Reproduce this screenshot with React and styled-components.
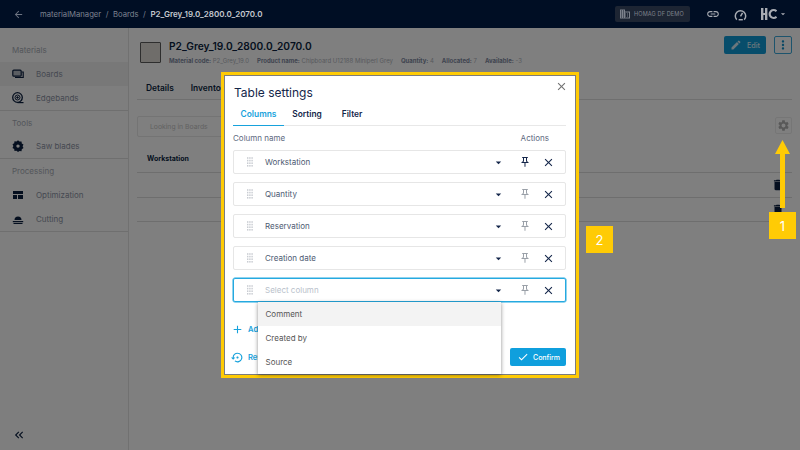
import React from "react";
import styled, { createGlobalStyle } from "styled-components";
import {
  MdArrowBack, MdDomain, MdLink, MdEdit, MdMoreVert, MdSettings, MdDelete, MdClose,
  MdOutlinePushPin, MdArrowDropDown, MdAdd, MdSettingsBackupRestore, MdCheck, MdKeyboardDoubleArrowLeft,
} from "react-icons/md";

const Global = createGlobalStyle`
  html, body { margin: 0; padding: 0; width: 800px; height: 450px; overflow: hidden; background: #fff; }
  body { font-family: Inter, "Liberation Sans", sans-serif; color: #0b1f3f; }
  * { box-sizing: border-box; }
`;

const Page = styled.div`width: 800px; height: 450px; display: flex; flex-direction: column;`;
const Header = styled.header`
  height: 28px; flex: none; background: #000e24; display: flex; align-items: center; position: relative; z-index: 2;
  padding: 0 12px 0 13px; color: #fff; font-size: 7.7px;
`;
const BackIcon = styled(MdArrowBack)`font-size: 11px; color: #6d7482; margin-right: 16px;`;
const Crumb = styled.span`color: ${p => (p.$strong ? "#c4c8cf" : "#7d8390")}; font-weight: ${p => (p.$strong ? 600 : 400)}; font-size: ${p => (p.$strong ? 8 : 7.7)}px; margin-right: 4.5px; white-space: nowrap;`;
const HeaderRight = styled.div`margin-left: auto; display: flex; align-items: center; color: #a8acb3;`;
const Chip = styled.div`
  width: 75px; height: 16px; background: #1d2533; border-radius: 2px; display: flex; align-items: center;
  padding-left: 4px; gap: 3px; font-size: 5.6px; color: #7d828c; margin-right: 16px; white-space: nowrap; letter-spacing: .1px;
`;
const ChipIcon = styled(MdDomain)`font-size: 12px; color: #7d828c; flex: none;`;
const TopLink = styled(MdLink)`font-size: 14px; margin-right: 14px;`;
const Gauge = styled.svg`width: 13px; height: 13px; margin-right: 14px;`;
const Logo = styled.svg`width: 16px; height: 12px;`;
const LogoCaret = styled(MdArrowDropDown)`font-size: 10px; margin-left: 1px;`;

const Body = styled.div`flex: 1; display: flex; min-height: 0;`;
const Sidebar = styled.nav`width: 129px; flex: none; border-right: 1px solid #e2e2e2; display: flex; flex-direction: column; position: relative; background: #fcfcfc;`;
const Section = styled.div`border-bottom: 1px solid #dedede; padding-top: ${p => p.$pad ?? 0}px;`;
const SectionTitle = styled.div`height: ${p => p.$h ?? 24}px; padding: 0 12px; display: flex; align-items: center; font-size: 8px; color: #a8adb6;`;
const NavItem = styled.div`
  height: 24px; display: flex; align-items: center; padding-left: 12px; font-size: 8px; color: #8c93a4;
  background: ${p => (p.$active ? "#f0f0f0" : "transparent")};
`;
const NavIconSlot = styled.span`width: 24px; display: flex; color: #0b1f3f; flex: none;`;
const NavSvg = styled.svg`width: 12px; height: 12px;`;
const Collapse = styled(MdKeyboardDoubleArrowLeft)`position: absolute; left: 12px; bottom: 8px; font-size: 14px; color: #0b1f3f;`;

const Main = styled.main`flex: 1; padding: 8px 8px 0 8px; min-width: 0;`;
const TitleRow = styled.div`display: flex; align-items: flex-start; height: 46px; padding-top: 6px;`;
const Thumb = styled.div`width: 21px; height: 21px; background: #dedad4; border: 1px solid #5d5d5d; border-radius: 1px; margin: 0 8px 0 3px; flex: none;`;
const Titles = styled.div`flex: 1; min-width: 0;`;
const BoardTitle = styled.div`font-size: 10.2px; font-weight: 600; line-height: 14px; margin-top: -3px;`;
const Meta = styled.div`display: flex; gap: 8px; font-size: 6px; margin-top: 4px; color: #b0b4bc; white-space: nowrap;`;
const MetaKey = styled.b`font-weight: 700; color: #8088a0;`;
const EditButton = styled.button`
  width: 42px; height: 18px; background: #0f9ad6; border: 0; border-radius: 2px; color: #d9eef8; margin-top: -6px;
  display: flex; align-items: center; justify-content: center; gap: 5px; font: 500 7.2px Inter, sans-serif;
`;
const MoreButton = styled.button`
  width: 18px; height: 18px; background: #fff; border: 1px solid #3ba9db; border-radius: 2px; margin: -6px 0 0 8px;
  display: flex; align-items: center; justify-content: center; padding: 0; color: #0f8fc9; font-size: 14px;
`;
const TabsBar = styled.div`height: 18px; border-bottom: 1px solid #dfdfdf; display: flex; gap: 17px; padding: 1px 0 0 9px; font-size: 8.4px; font-weight: 600; line-height: 10px;`;
const SearchRow = styled.div`display: flex; align-items: flex-start; justify-content: space-between; margin-top: 16px; height: 21px;`;
const SearchBox = styled.div`width: 300px; height: 21px; border: 1px solid #e8e8e8; border-radius: 2px; padding-left: 12px; display: flex; align-items: center; font-size: 6.8px; color: #c4c4c4;`;
const GearBox = styled.div`width: 17px; height: 17px; margin-top: 1px; border: 1px solid #ececec; border-radius: 2px; display: flex; align-items: center; justify-content: center; color: #b0b0b0; font-size: 13px;`;
const TableHead = styled.div`height: 36px; border-bottom: 1px solid #dcdcdc; display: flex; align-items: center; padding: 8px 0 0 10px; font-size: 7px; font-weight: 700;`;
const TableRow = styled.div`height: ${p => p.$h}px; border-bottom: 1px solid #dcdcdc; display: flex; align-items: center; justify-content: flex-end; padding-right: 7px; font-size: 14px; color: #0b1f3f;`;

const Overlay = styled.div`position: fixed; inset: 0; z-index: 1; background: rgba(0,0,0,.5); display: flex; align-items: center; justify-content: center;`;
const Highlight = styled.div`border: 3px solid #ffcb05; padding: 1px; background: #7c7c7c;`;
const Dialog = styled.section`width: 350px; height: 298px; background: #fff; padding: 0 9px 0 8px; position: relative; display: flex; flex-direction: column;`;
const DialogHead = styled.div`height: 31px; padding: 9px 0 0 1px; display: flex; justify-content: space-between;`;
const DialogTitle = styled.h2`margin: 0; font-size: 12px; line-height: 15px; font-weight: 400; color: #14264a;`;
const CloseButton = styled(MdClose)`font-size: 13px; color: #727272; margin: 0 -2px 0 0; position: relative; top: -5px;`;
const DialogTabs = styled.div`height: 19px; border-bottom: 1px solid #e8e8e8; display: flex;`;
const DialogTab = styled.div`
  width: ${p => p.$w}px; height: 19px; text-align: center; font-size: 8.4px; font-weight: 600; padding-top: 1px; line-height: 12px;
  color: ${p => (p.$active ? "#17a2dc" : "#14264a")};
  border-bottom: 1.5px solid ${p => (p.$active ? "#17a2dc" : "transparent")};
`;
const ColHead = styled.div`height: 24px; display: flex; justify-content: space-between; align-items: center; font-size: 8px; color: #5d6980; padding: 0 17px 0 0;`;
const Rows = styled.div`display: flex; flex-direction: column; gap: 8px;`;
const Row = styled.div`
  height: 24px; border: 1px solid ${p => (p.$focus ? "#25a9e0" : "#e6e6e6")}; border-radius: 2px; display: flex; align-items: center;
  padding-left: 13px; font-size: 8px; color: ${p => (p.$placeholder ? "#b9bfcb" : "#4d5a72")};
  box-shadow: ${p => (p.$focus ? "0 0 0 .5px #25a9e0" : "none")};
`;
const Grip = styled.svg`width: 6px; height: 10px; margin-right: 12px; flex: none;`;
const RowLabel = styled.span`flex: 1;`;
const Caret = styled(MdArrowDropDown)`font-size: 13px; color: #14264a; margin-right: 14px;`;
const Pin = styled(MdOutlinePushPin)`font-size: 12px; color: ${p => (p.$dim ? "#9aa0a8" : "#14264a")}; margin-right: 11px;`;
const RowClose = styled(MdClose)`font-size: 13px; color: #14264a; margin-right: 10px;`;
const AddLine = styled.div`display: flex; align-items: center; height: 14px; margin-top: 20px; margin-left: -2px; gap: 4px; color: #17a2dc; font-size: 7.6px; font-weight: 600;`;
const PlusIcon = styled(MdAdd)`font-size: 13px;`;
const Footer = styled.div`display: flex; justify-content: space-between; align-items: center; margin-top: 12px; height: 18px; color: #17a2dc; font-size: 7.6px; font-weight: 600;`;
const Reset = styled.span`display: flex; align-items: center; gap: 4px; margin-left: -2px;`;
const ResetIcon = styled(MdSettingsBackupRestore)`font-size: 13px;`;
const Confirm = styled.button`
  width: 56px; height: 18px; border: 0; background: #0f9fdd; color: #fff; border-radius: 2px; display: flex; align-items: center;
  padding: 0 0 0 7px; gap: 4px; font: 500 7px Inter, sans-serif;
`;
const ConfirmIcon = styled(MdCheck)`font-size: 12px;`;
const Menu = styled.div`position: absolute; left: 32.5px; top: 226px; width: 243px; background: #fff; box-shadow: 0 1px 4px rgba(0,0,0,.45); z-index: 2;`;
const MenuItem = styled.div`height: 24px; display: flex; align-items: center; padding-left: 8px; font-size: 8px; color: #555; background: ${p => (p.$hover ? "#f3f3f3" : "#fff")};`;

const Tag = styled.div`position: absolute; left: ${p => p.$x}px; top: ${p => p.$y}px; width: 27px; height: 27px; background: #ffcb05; color: #fff; display: flex; align-items: center; justify-content: center; font-size: 13px;`;
const ArrowSvg = styled.svg`position: absolute; left: 775px; top: 140px; width: 15px; height: 70px;`;

const GripIcon = () => (
  <Grip viewBox="0 0 6 10">
    {[0, 1, 2].flatMap(c => [0, 1, 2, 3].map(r => <rect key={`${c}${r}`} x={c * 2.2} y={r * 2.6 + .2} width="1.4" height="1.6" fill="#c9ccd2" />))}
  </Grip>
);

const ColumnRow = ({ label, dim, focus, placeholder }) => (
  <Row $focus={focus} $placeholder={placeholder}>
    <GripIcon />
    <RowLabel>{label}</RowLabel>
    <Caret />
    <Pin $dim={dim} />
    <RowClose />
  </Row>
);

const Nav = ({ active, icon, children }) => (
  <NavItem $active={active}><NavIconSlot>{icon}</NavIconSlot>{children}</NavItem>
);

export default function App() {
  return (
    <>
      <Global />
      <Page>
        <Header>
          <BackIcon />
          <Crumb>materialManager</Crumb><Crumb>/</Crumb><Crumb>Boards</Crumb><Crumb>/</Crumb>
          <Crumb $strong>P2_Grey_19.0_2800.0_2070.0</Crumb>
          <HeaderRight>
            <Chip><ChipIcon />HOMAG DF DEMO</Chip>
            <TopLink />
            <Gauge viewBox="0 0 14 14" fill="none" stroke="#a8acb3" strokeWidth="1.6">
              <path d="M3 12.5A5.6 5.6 0 1 1 11 12.5" />
              <path d="M7 9 L9.2 5.2" />
              <path d="M5 12.6h4.5" />
            </Gauge>
            <Logo viewBox="0 0 16 12">
              <path fill="#a8acb3" d="M0 0h2.4v12H0zM4 0h2.4v12H4zM2.4 5H4v2H2.4z" />
              <path fill="none" stroke="#a8acb3" strokeWidth="2.2" d="M15.5 3.2A4 4 0 1 0 15.5 8.8" />
            </Logo>
            <LogoCaret />
          </HeaderRight>
        </Header>
        <Body>
          <Sidebar>
            <Section $pad={10}>
              <SectionTitle>Materials</SectionTitle>
              <Nav active icon={<NavSvg viewBox="0 0 12 12" fill="none" stroke="#0b1f3f" strokeWidth="1.2"><rect x=".8" y="2.2" width="8.4" height="6" rx="1" fill="#0b1f3f" fillOpacity=".25" /><path d="M10 4h1.2v5.5H3" /></NavSvg>}>Boards</Nav>
              <Nav icon={<NavSvg viewBox="0 0 12 12" fill="none" stroke="#0b1f3f"><circle cx="5.5" cy="5.5" r="4.8" strokeWidth="1.3" /><circle cx="5.5" cy="5.5" r="2.5" /><circle cx="5.5" cy="5.5" r=".8" fill="#0b1f3f" /><path d="M5.5 10.6H11.5" strokeWidth="1.2" /></NavSvg>}>Edgebands</Nav>
            </Section>
            <Section>
              <SectionTitle $h={23}>Tools</SectionTitle>
              <Nav icon={<NavSvg viewBox="0 0 12 12"><path fill="#0b1f3f" fillRule="evenodd" d="M6 .3l1.5 1.3 2-.2.3 2 1.7 1.1-.9 1.8.9 1.8-1.7 1.1-.3 2-2-.2L6 12l-1.5-1.3-2 .2-.3-2L.5 7.9l.9-1.8-.9-1.8 1.7-1.1.3-2 2 .2zM6 4.4a1.7 1.7 0 1 0 0 3.4 1.7 1.7 0 0 0 0-3.4z" /></NavSvg>}>Saw blades</Nav>
            </Section>
            <Section>
              <SectionTitle>Processing</SectionTitle>
              <Nav icon={<NavSvg viewBox="0 0 12 12"><path fill="#0b1f3f" d="M1 2h10v3H1zM1 6h4v4H1zM6 6h5v4H6z" /></NavSvg>}>Optimization</Nav>
              <Nav icon={<NavSvg viewBox="0 0 12 12"><path fill="#0b1f3f" d="M2.5 7a3.5 3.5 0 0 1 7 0zM.8 8h10.4v1.2H.8zM1.5 10h9v1h-9z" /></NavSvg>}>Cutting</Nav>
            </Section>
            <Collapse />
          </Sidebar>
          <Main>
            <TitleRow>
              <Thumb />
              <Titles>
                <BoardTitle>P2_Grey_19.0_2800.0_2070.0</BoardTitle>
                <Meta>
                  <span><MetaKey>Material code:</MetaKey> P2_Grey_19.0</span>
                  <span><MetaKey>Product name:</MetaKey> Chipboard U12188 Miniperl Grey</span>
                  <span><MetaKey>Quantity:</MetaKey> 4</span>
                  <span><MetaKey>Allocated:</MetaKey> 7</span>
                  <span><MetaKey>Available:</MetaKey> -3</span>
                </Meta>
              </Titles>
              <EditButton><MdEdit size={12} />Edit</EditButton>
              <MoreButton><MdMoreVert /></MoreButton>
            </TitleRow>
            <TabsBar><span>Details</span><span>Inventory</span></TabsBar>
            <SearchRow>
              <SearchBox>Looking in Boards</SearchBox>
              <GearBox><MdSettings /></GearBox>
            </SearchRow>
            <TableHead>Workstation</TableHead>
            <TableRow $h={25}><MdDelete /></TableRow>
            <TableRow $h={24}><MdDelete /></TableRow>
          </Main>
        </Body>
      </Page>
      <Overlay>
        <Highlight>
          <Dialog>
            <DialogHead>
              <DialogTitle>Table settings</DialogTitle>
              <CloseButton />
            </DialogHead>
            <DialogTabs>
              <DialogTab $w={51} $active>Columns</DialogTab>
              <DialogTab $w={46}>Sorting</DialogTab>
              <DialogTab $w={44}>Filter</DialogTab>
            </DialogTabs>
            <ColHead><span>Column name</span><span>Actions</span></ColHead>
            <Rows>
              <ColumnRow label="Workstation" />
              <ColumnRow label="Quantity" dim />
              <ColumnRow label="Reservation" dim />
              <ColumnRow label="Creation date" dim />
              <ColumnRow label="Select column" dim focus placeholder />
            </Rows>
            <AddLine><PlusIcon />Add</AddLine>
            <Footer>
              <Reset><ResetIcon />Reset</Reset>
              <Confirm><ConfirmIcon />Confirm</Confirm>
            </Footer>
            <Menu>
              <MenuItem $hover>Comment</MenuItem>
              <MenuItem>Created by</MenuItem>
              <MenuItem>Source</MenuItem>
            </Menu>
          </Dialog>
        </Highlight>
        <ArrowSvg viewBox="0 0 15 70"><path fill="#ffcb05" d="M7.5 0L15 14H10V68H5V14H0z" /></ArrowSvg>
        <Tag $x={769} $y={212}>1</Tag>
        <Tag $x={586} $y={226}>2</Tag>
      </Overlay>
    </>
  );
}
